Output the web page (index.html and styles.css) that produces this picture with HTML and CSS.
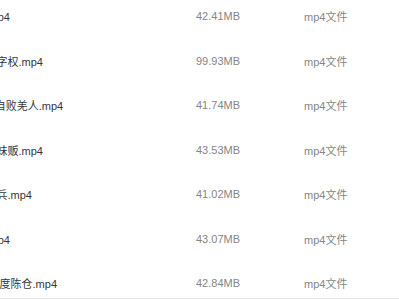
FILE: index.html
```html
<!DOCTYPE html>
<html lang="zh-CN">
<head>
<meta charset="utf-8">
<title>文件列表</title>
<link rel="stylesheet" href="styles.css">
</head>
<body>
<div class="viewport">
  <div class="list">
    <div class="row"><div class="name"><span class="name-text">鸿门之宴.mp4</span></div><div class="size">42.41MB</div><div class="type">mp4文件</div></div>
    <div class="row"><div class="name"><span class="name-text">楚汉相争夺字权.mp4</span></div><div class="size">99.93MB</div><div class="type">mp4文件</div></div>
    <div class="row"><div class="name"><span class="name-text">9 赵充国令自败羌人.mp4</span></div><div class="size">41.74MB</div><div class="type">mp4文件</div></div>
    <div class="row"><div class="name"><span class="name-text">卫子夫之姐妹贩.mp4</span></div><div class="size">43.53MB</div><div class="type">mp4文件</div></div>
    <div class="row"><div class="name"><span class="name-text">韩信井陉用兵.mp4</span></div><div class="size">41.02MB</div><div class="type">mp4文件</div></div>
    <div class="row"><div class="name"><span class="name-text">约法三章.mp4</span></div><div class="size">43.07MB</div><div class="type">mp4文件</div></div>
    <div class="row"><div class="name"><span class="name-text">明修栈道 暗度陈仓.mp4</span></div><div class="size">42.84MB</div><div class="type">mp4文件</div></div>
  </div>
</div>
<div class="scrollbar"></div>
</body>
</html>
```
FILE: styles.css
```css
html, body {
  margin: 0;
  padding: 0;
  background: #ffffff;
}
body {
  width: 399px;
  height: 300px;
  overflow: hidden;
  display: flex;
  flex-direction: column;
  font-family: "Liberation Sans", "Noto Sans CJK SC", sans-serif;
  font-size: 11px;
}
.viewport {
  height: 298px;
  flex: none;
  overflow: hidden;
}
.list {
  margin-top: -6.25px;
}
.row {
  display: grid;
  grid-template-columns: 196px 108px 1fr;
  height: 44.5px;
  align-items: center;
  white-space: pre;
}
.name {
  overflow: hidden;
  color: #33363d;
}
.name-text {
  display: inline-block;
  margin-left: -58.5px;
}
.size,
.type {
  color: #858585;
}
.scrollbar {
  flex: none;
  height: 1px;
  background: #e6e6e6;
}
```
